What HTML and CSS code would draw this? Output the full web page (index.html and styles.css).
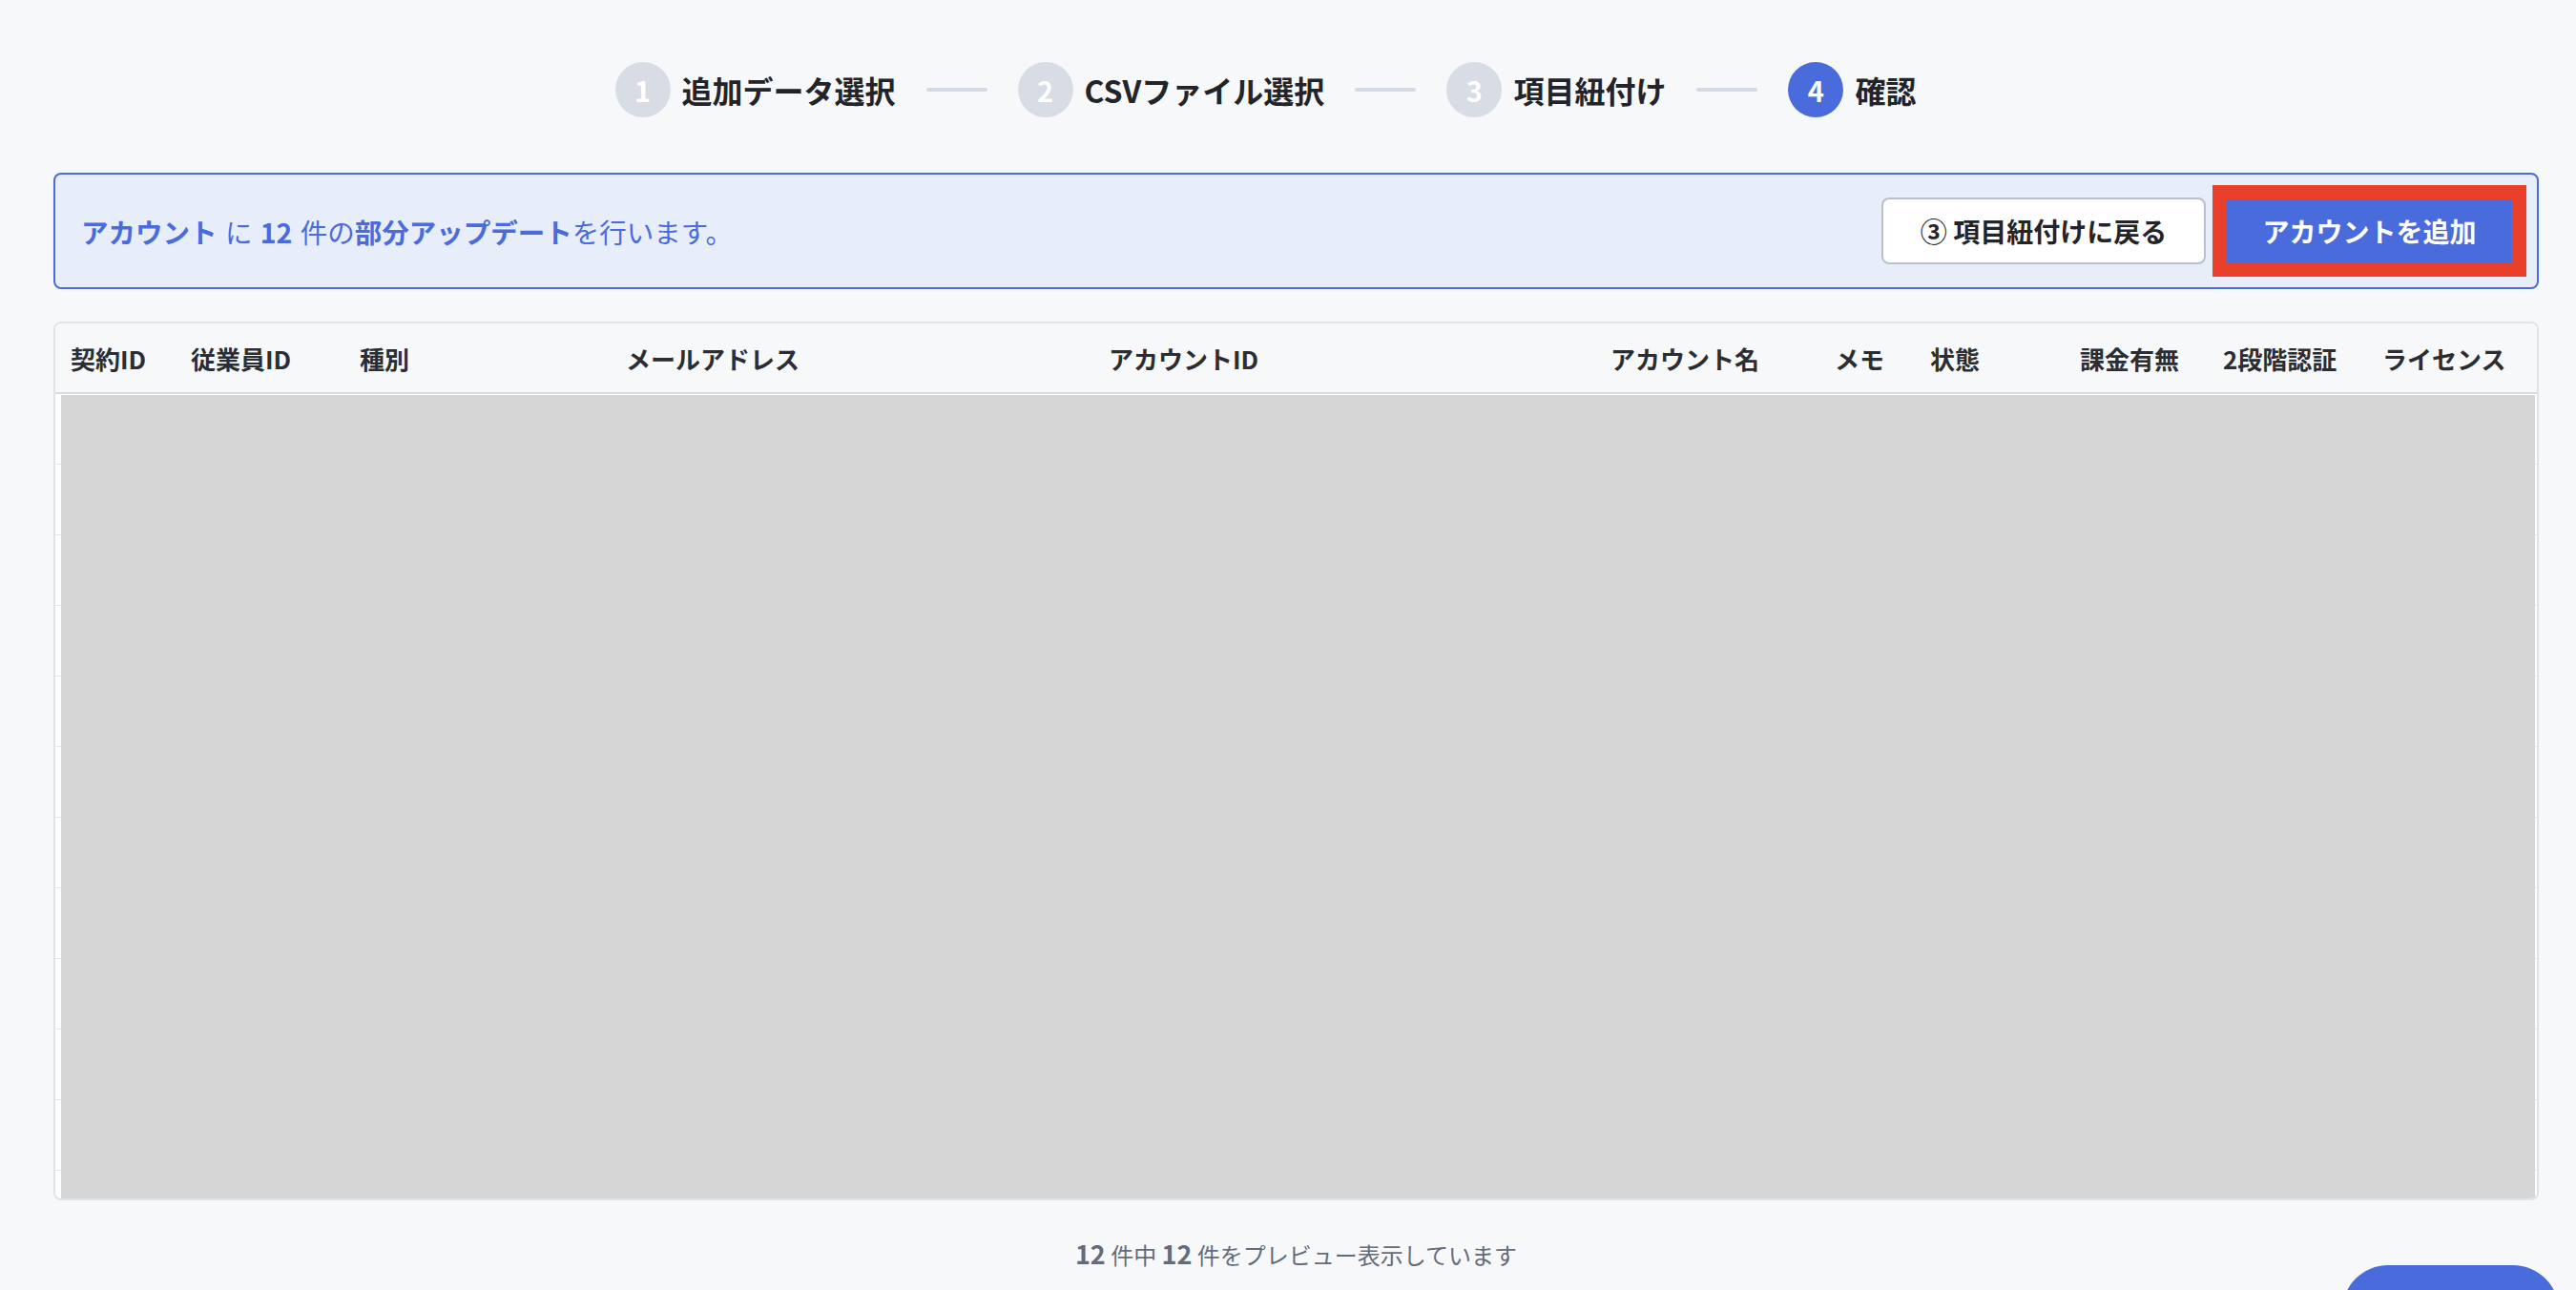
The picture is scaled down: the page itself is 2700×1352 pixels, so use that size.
FILE: index.html
```html
<!DOCTYPE html>
<html lang="ja">
<head>
    <meta charset="UTF-8">
    <meta name="viewport" content="width=device-width, initial-scale=1.0">
    <title>CSVインポート - 確認</title>
    <link rel="stylesheet" href="styles.css">
</head>
<body>
    <main class="page">
        <nav class="steps">
            <div class="step"><span class="step-num">1</span><span class="step-label">追加データ選択</span></div>
            <span class="step-line"></span>
            <div class="step"><span class="step-num">2</span><span class="step-label">CSVファイル選択</span></div>
            <span class="step-line"></span>
            <div class="step"><span class="step-num">3</span><span class="step-label">項目紐付け</span></div>
            <span class="step-line"></span>
            <div class="step active"><span class="step-num">4</span><span class="step-label">確認</span></div>
        </nav>

        <section class="summary">
            <p class="summary-text">
                <strong>アカウント</strong> に <strong>12</strong> 件の<strong>部分アップデート</strong>を行います。
            </p>
            <div class="actions">
                <button class="btn btn-back">③ 項目紐付けに戻る</button>
                <button class="btn btn-primary highlight">アカウントを追加</button>
            </div>
        </section>

        <div class="table-wrap">
            <table>
                <colgroup>
                    <col style="width: 126px">
                    <col style="width: 177px">
                    <col style="width: 279px">
                    <col style="width: 506px">
                    <col style="width: 526px">
                    <col style="width: 235px">
                    <col style="width: 100px">
                    <col style="width: 157px">
                    <col style="width: 150px">
                    <col style="width: 167px">
                    <col style="width: 178px">
                </colgroup>
                <thead>
                    <tr>
                        <th>契約ID</th>
                        <th>従業員ID</th>
                        <th>種別</th>
                        <th>メールアドレス</th>
                        <th>アカウントID</th>
                        <th>アカウント名</th>
                        <th>メモ</th>
                        <th>状態</th>
                        <th>課金有無</th>
                        <th>2段階認証</th>
                        <th>ライセンス</th>
                    </tr>
                </thead>
                <tbody id="rows"></tbody>
            </table>
            <!-- preview rows are masked -->
            <div class="mask"></div>
        </div>

        <p class="preview-count"><strong>12</strong> 件中 <strong>12</strong> 件をプレビュー表示しています</p>
    </main>

    <button class="fab" aria-label="ヘルプ"></button>

    <script>
        // 12 empty preview rows, 11 columns each
        let body = document.getElementById('rows');
        for (let i = 0; i < 12; i++) {
            let tr = document.createElement('tr');
            for (let j = 0; j < 11; j++) {
                tr.appendChild(document.createElement('td'));
            }
            body.appendChild(tr);
        }
    </script>
</body>
</html>
```

FILE: styles.css
```css
html {
    font-family: "Noto Sans CJK JP", "Noto Sans", sans-serif;
}
body {
    margin: 0;
    background: #f7f8fa;
    color: #23252b;
    overflow: hidden;
}
.page {
    padding: 65px 39px 0 56px;
}

/* step indicator */
.steps {
    display: flex;
    justify-content: center;
    align-items: center;
    gap: 32px;
    padding-right: 64px;
    margin-bottom: 58px;
}
.step {
    display: flex;
    align-items: center;
    gap: 12px;
}
.step-num {
    width: 58px;
    height: 58px;
    border-radius: 50%;
    background: #d7dce5;
    color: #fff;
    font-size: 29px;
    font-weight: 700;
    display: flex;
    align-items: center;
    justify-content: center;
}
.step.active .step-num {
    background: #4a6bdb;
}
.step-label {
    font-size: 32px;
    font-weight: 700;
    color: #22242a;
}
.step-line {
    width: 64px;
    height: 4px;
    border-radius: 2px;
    background: #d5dae3;
}

/* summary bar */
.summary {
    display: flex;
    align-items: center;
    justify-content: space-between;
    padding: 24px 24px 24px 27px;
    background: #e8eef9;
    border: 2px solid #4a6bdb;
    border-radius: 8px;
    margin-bottom: 34px;
}
.summary-text {
    margin: 0;
    font-size: 28.5px;
    color: #4a6bdb;
    word-spacing: 2px;
}
.summary-text strong {
    font-weight: 700;
}
.actions {
    display: flex;
    gap: 20px;
}
.btn {
    height: 70px;
    padding: 0 36px;
    border-radius: 8px;
    font-family: inherit;
    font-size: 28px;
    font-weight: 700;
    cursor: pointer;
}
.btn-back {
    width: 340px;
    background: #fff;
    color: #22242a;
    border: 2px solid #b9c0cc;
}
.btn-primary {
    width: 303px;
    background: #4a6bdb;
    color: #fff;
    border: 2px solid #4a6bdb;
    border-radius: 0;
}
.highlight {
    outline: 15px solid #e8402a;
    outline-offset: -2px;
}

/* preview table */
.table-wrap {
    position: relative;
    height: 921px;
    box-sizing: border-box;
    border: 2px solid #dfe3ea;
    border-radius: 8px;
    background: #fff;
    overflow: hidden;
}
table {
    width: 100%;
    border-collapse: collapse;
    table-layout: fixed;
}
th {
    height: 72px;
    padding: 0 16px;
    text-align: left;
    font-size: 26px;
    font-weight: 700;
    color: #2b2d33;
    background: #f7f8fa;
    border-bottom: 2px solid #d5dae3;
    white-space: nowrap;
}
td {
    height: 73px;
    padding: 0;
    border-bottom: 1px solid #e3e6ec;
}
.mask {
    position: absolute;
    left: 6px;
    right: 2px;
    top: 75px;
    bottom: 0;
    background: #d6d6d6;
}

.preview-count {
    margin: 36px 0 0;
    text-align: center;
    font-size: 24px;
    color: #646b7a;
}
.preview-count strong {
    font-weight: 700;
    font-size: 27px;
}

/* floating help button */
.fab {
    position: fixed;
    right: 18px;
    bottom: -70px;
    width: 227px;
    height: 96px;
    border: none;
    border-radius: 48px;
    background: #4a6bdb;
}
```
